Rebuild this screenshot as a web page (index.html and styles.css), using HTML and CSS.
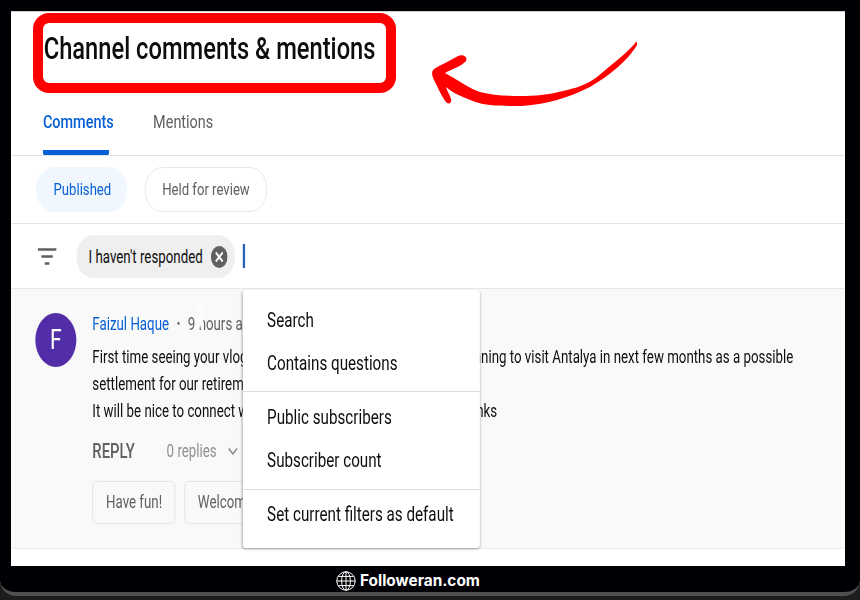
FILE: index.html
```html
<!DOCTYPE html>
<html lang="en">
<head>
    <meta charset="UTF-8">
    <title>Channel comments &amp; mentions</title>
    <link rel="stylesheet" href="styles.css">
</head>
<body>
    <div class="laptop">
        <div class="viewport">
            <div class="screen">
                <h1 class="title">Channel comments &amp; mentions</h1>
                <div class="tabs">
                    <div class="tab active">Comments</div>
                    <div class="tab">Mentions</div>
                </div>
                <div class="status-row">
                    <div class="status-chip active">Published</div>
                    <div class="status-chip">Held for review</div>
                </div>
                <div class="filter-row">
                    <svg class="filter-icon" viewBox="0 0 25 17">
                        <path d="M0 1.5h25M5 8.5h15M9.5 15.5h6" stroke="#606060" stroke-width="2.4" fill="none"/>
                    </svg>
                    <div class="filter-chip">
                        <span>I haven't responded</span>
                        <svg class="chip-close" viewBox="0 0 22 22">
                            <circle cx="11" cy="11" r="11" fill="#606060"/>
                            <path d="M6.5 6.5l9 9M15.5 6.5l-9 9" stroke="#fff" stroke-width="2.4"/>
                        </svg>
                    </div>
                    <div class="caret"></div>
                </div>
                <div class="comment">
                    <div class="avatar">F</div>
                    <div class="comment-body">
                        <div class="comment-head">
                            <span class="author">Faizul Haque</span>
                            <span class="dot">•</span>
                            <span class="age">9 hours ago</span>
                        </div>
                        <p class="comment-text">First time seeing your vlog from Turkey. My wife and I are just planning to visit Antalya in next few months as a possible<br>settlement for our retirement.<br>It will be nice to connect with you for some important advice. Thanks</p>
                        <div class="comment-actions">
                            <span class="reply">REPLY</span>
                            <span class="replies">0 replies</span>
                            <svg class="chevron" viewBox="0 0 14 9">
                                <path d="M1.5 1.5L7 7l5.5-5.5" stroke="#909090" stroke-width="1.8" fill="none"/>
                            </svg>
                        </div>
                        <div class="quick-replies">
                            <div class="quick-reply">Have fun!</div>
                            <div class="quick-reply">Welcome!</div>
                        </div>
                    </div>
                </div>
                <div class="smudge"></div>
                <div class="menu">
                    <div class="menu-group first">
                        <div class="menu-item">Search</div>
                        <div class="menu-item">Contains questions</div>
                    </div>
                    <div class="menu-group second">
                        <div class="menu-item">Public subscribers</div>
                        <div class="menu-item">Subscriber count</div>
                    </div>
                    <div class="menu-group third">
                        <div class="menu-item">Set current filters as default</div>
                    </div>
                </div>
            </div>
        </div>
        <div class="brand">
            <svg class="globe" viewBox="0 0 20 20">
                <g stroke="#fff" stroke-width="1" fill="none">
                    <circle cx="10" cy="10" r="9.2"/>
                    <ellipse cx="10" cy="10" rx="4.4" ry="9.2"/>
                    <path d="M10 .8v18.4M.8 10h18.4M2.2 5.4h15.6M2.2 14.6h15.6"/>
                </g>
            </svg>
            <span>Followeran.com</span>
        </div>

        <!-- red annotations drawn on top of the screenshot -->
        <div class="red-box"></div>
        <svg class="red-arrow" viewBox="0 0 860 600">
            <path fill="#f00" d="M636 42C630 50 615 62 597 77C585 86 575 88 563 91C548 95 535 96 520 96C505 96 492 95 480 92C470 89 458 80 445 73C452 69 462 66 466 61C468 57 463 54 458 56C450 61 440 65 434 69C431 72 432 76 434 80C438 88 442 97 446 102C449 105 452 103 451 99C450 95 447 91 446 87C452 92 458 95 463 97C472 101 480 104 490 105C500 106 512 106 522 106C535 105 547 103 557 100C570 96 580 92 590 87C600 81 610 74 618 67C625 61 633 52 637 45C637 42 637 41 636 42Z"/>
        </svg>
    </div>
</body>
</html>
```

FILE: styles.css
```css
* {
    box-sizing: border-box;
}
body {
    margin: 0;
    height: 600px;
    overflow: hidden;
    background: #1d1d1f;
    font-family: Roboto, sans-serif;
}
.laptop {
    position: relative;
    height: 596px;
    padding: 11px 15px 0 11px;
    background: #000004;
    border-bottom: 4px solid #4f4f4f;
    border-radius: 0 0 16px 16px;
}
.viewport {
    width: 834px;
    height: 555px;
    overflow: hidden;
    background: #fff;
    border-top: 1px solid #d0d0d0;
}
/* the whole capture is squeezed sideways, so the page is laid out wide and scaled */
.screen {
    position: relative;
    width: 1097px;
    transform: scaleX(0.76);
    transform-origin: top left;
}
.title {
    margin: 0;
    padding: 19px 0 0 43px;
    font-size: 31.2px;
    font-weight: 500;
    line-height: 36px;
    color: #0d0d0d;
}
.tabs {
    display: flex;
    gap: 58px;
    margin-top: 27px;
    padding-left: 42px;
    border-bottom: 1px solid #e3e3e3;
}
.tab {
    height: 61px;
    padding-top: 16px;
    font-size: 19px;
    line-height: 24px;
    color: #606060;
}
.tab.active {
    width: 87px;
    font-weight: 500;
    color: #065fd4;
    white-space: nowrap;
    border-bottom: 5px solid #065fd4;
    border-radius: 0 0 2px 2px;
}
.status-row {
    display: flex;
    gap: 23px;
    padding: 11px 0 11px 33px;
    border-bottom: 1px solid #e3e3e3;
}
.status-chip {
    height: 45px;
    padding: 0 22px;
    font-size: 17.3px;
    line-height: 43px;
    color: #606060;
    background: #fff;
    border: 1px solid #e6e6e6;
    border-radius: 23px;
}
.status-chip.active {
    padding: 0 20px 0 22px;
    color: #065fd4;
    background: #f1f7fe;
    border-color: #f1f7fe;
}
.filter-row {
    display: flex;
    align-items: center;
    height: 65px;
    padding-left: 35px;
    border-bottom: 1px solid #e8e8e8;
}
.filter-icon {
    width: 25px;
    height: 17px;
    margin-right: 26px;
}
.filter-chip {
    display: flex;
    align-items: center;
    width: 209px;
    height: 43px;
    padding: 0 10px 0 16px;
    margin-top: 1px;
    font-size: 17.5px;
    color: #0d0d0d;
    background: #efefef;
    border-radius: 22px;
    white-space: nowrap;
}
.chip-close {
    flex: none;
    width: 22px;
    height: 22px;
    margin-left: auto;
}
.caret {
    width: 2.5px;
    height: 24px;
    margin-left: 10px;
    background: #2a62b8;
}
.comment {
    display: flex;
    gap: 21px;
    height: 260px;
    padding: 24px 0 0 32px;
    background: #f9f9f9;
    border-bottom: 1px solid #ececec;
}
.avatar {
    flex: none;
    width: 54px;
    height: 54px;
    font-size: 28px;
    line-height: 54px;
    text-align: center;
    color: #fff;
    background: #512da8;
    border-radius: 50%;
}
.comment-head {
    display: flex;
    align-items: center;
    height: 22px;
    margin-bottom: 9px;
    font-size: 17.5px;
}
.author {
    color: #065fd4;
}
.dot {
    margin: 0 10px;
    font-size: 14px;
    color: #606060;
}
.age {
    color: #606060;
}
.comment-text {
    margin: 0;
    font-size: 17.5px;
    line-height: 27px;
    color: #0d0d0d;
    white-space: nowrap;
}
.comment-actions {
    display: flex;
    align-items: center;
    height: 24px;
    margin-top: 14px;
}
.reply {
    font-size: 19.5px;
    font-weight: 500;
    color: #606060;
}
.replies {
    margin-left: 42px;
    font-size: 17.5px;
    color: #909090;
}
.chevron {
    width: 14px;
    height: 9px;
    margin-left: 14px;
}
.quick-replies {
    display: flex;
    gap: 12px;
    margin-top: 18px;
}
.quick-reply {
    height: 43px;
    padding: 0 16px 0 17px;
    font-size: 17.5px;
    line-height: 41px;
    color: #606060;
    border: 1px solid #e3e3e3;
    border-radius: 6px;
}
/* white scratch over the timestamp in the capture */
.smudge {
    position: absolute;
    left: 244px;
    top: 291px;
    width: 9px;
    height: 24px;
    background: #fbfbfb;
    filter: blur(1px);
}
.menu {
    position: absolute;
    left: 305px;
    top: 278px;
    width: 312px;
    height: 258px;
    background: #fff;
    border-radius: 4px;
    box-shadow: 0 1px 3px rgba(0, 0, 0, 0.35);
}
.menu-group {
    border-bottom: 1px solid #dedede;
}
.menu-group.first {
    padding: 9px 0 6px;
}
.menu-group.second {
    padding: 4px 0 7px;
}
.menu-group.third {
    padding-top: 3px;
    border-bottom: 0;
}
.menu-item {
    height: 43px;
    padding-left: 32px;
    font-size: 20px;
    line-height: 43px;
    color: #0d0d0d;
    white-space: nowrap;
}
.brand {
    position: absolute;
    left: 336px;
    top: 571px;
    display: flex;
    align-items: center;
    gap: 4px;
    font-family: Inter, sans-serif;
    font-size: 15.4px;
    font-weight: 700;
    line-height: 20px;
    color: #fff;
}
.globe {
    width: 20px;
    height: 20px;
}
.red-box {
    position: absolute;
    left: 33px;
    top: 13px;
    width: 363px;
    height: 80px;
    border: 10px solid #f00;
    border-radius: 16px;
}
.red-arrow {
    position: absolute;
    left: 0;
    top: 0;
    width: 860px;
    height: 600px;
}
```
